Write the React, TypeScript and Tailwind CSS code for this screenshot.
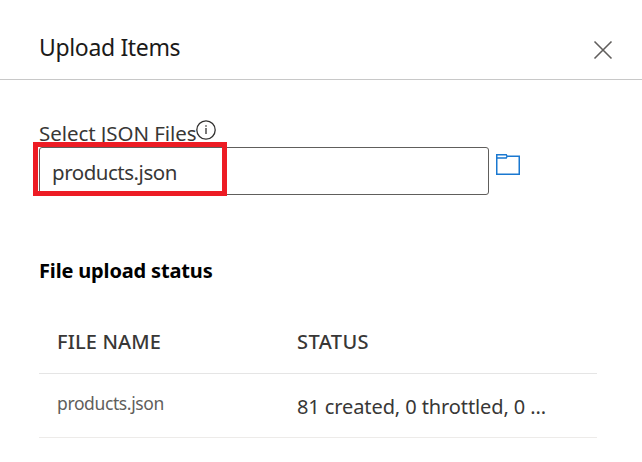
export default function App() {
  return (
    <main className="h-[462px] w-[642px] overflow-hidden bg-white font-['Noto_Sans','Open_Sans',sans-serif] text-[#383736]">
      <header className="flex h-20 items-start justify-between border-b border-[#c8c8c8] pl-[39px] pr-[29px] pt-8">
        <h1 className="-mt-px whitespace-nowrap text-[23px] leading-8 tracking-[-0.35px] text-[#1b1a19]">Upload Items</h1>
        <button aria-label="Close" className="mt-2">
          <svg width="20" height="20" viewBox="0 0 20 20" fill="none" stroke="#605e5c" strokeWidth="1.6">
            <path d="M1.5 1.5 18.5 18.5M18.5 1.5 1.5 18.5" />
          </svg>
        </button>
      </header>

      <section className="pl-[39px] pt-[39px]">
        <div className="flex h-7 items-start">
          <label className="whitespace-nowrap text-[20.5px] leading-7 tracking-[-0.07px]">Select JSON Files</label>
          <svg className="mt-px" width="20" height="20" viewBox="0 0 20 20" fill="none" stroke="#323130">
            <circle cx="10" cy="10" r="9.2" strokeWidth="1.3" />
            <path d="M10 8v6M10 5.2v1.5" strokeWidth="1.3" />
          </svg>
        </div>
        <div className="flex items-start">
          <div className="relative h-12 w-[450px] rounded-[3px] border border-[#605e5c] pl-3 pt-[10px]">
            <span className="block text-[20.5px] leading-7 tracking-[-0.48px]">products.json</span>
            <div className="absolute -left-[7px] -top-[6px] h-[54px] w-[194px] border-[5px] border-[#ed1c24]" />
          </div>
          <svg className="ml-[7px] mt-[7px]" width="24" height="21" viewBox="0 0 24 21" fill="none" stroke="#1a78d0" strokeWidth="1.5">
            <path d="M.75.75h9.5l.8 1.5-.8 1.75H.75zM11 2.25h12.25v18H.75V4" />
          </svg>
        </div>
      </section>

      <section className="pl-[39px] pt-[62px]">
        <h2 className="whitespace-nowrap text-[20px] font-bold leading-7 tracking-[-0.16px] text-black">File upload status</h2>
        <div className="mt-[25px] w-[558px]">
          <div className="grid h-[64px] grid-cols-[240px_1fr] border-b border-[#e5e5e5] pl-[18px] pt-[18px] text-[20px] font-medium leading-7">
            <span className="tracking-[0.15px]">FILE NAME</span>
            <span className="tracking-[0.4px]">STATUS</span>
          </div>
          <div className="grid h-16 grid-cols-[240px_1fr] border-b border-[#edebe9] pl-[18px] pt-[17px] leading-7">
            <span className="-mt-0.5 text-[17.5px] tracking-[-0.38px] text-[#605e5c]">products.json</span>
            <span className="mt-0.5 whitespace-nowrap text-[20px] tracking-[-0.1px]">81 created, 0 throttled, 0 ...</span>
          </div>
        </div>
      </section>
    </main>
  );
}
